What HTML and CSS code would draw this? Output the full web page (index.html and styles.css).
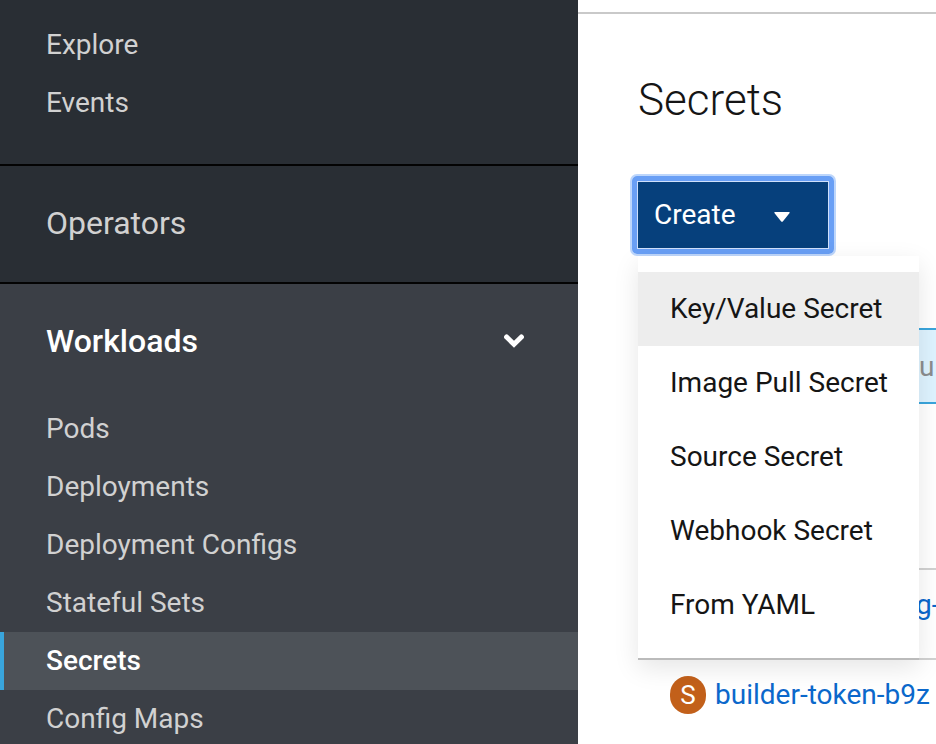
FILE: index.html
```html
<!DOCTYPE html>
<html lang="en">
<head>
<meta charset="utf-8">
<title>Secrets</title>
<link rel="stylesheet" href="styles.css">
</head>
<body>
<div class="shell">
  <nav class="sidebar">
    <section class="group group-first">
      <a class="nav-link" href="#explore">Explore</a>
      <a class="nav-link" href="#events">Events</a>
    </section>
    <section class="group">
      <button class="nav-toggle" type="button">Operators</button>
    </section>
    <section class="group group-open">
      <button class="nav-toggle" type="button" aria-expanded="true">Workloads
        <svg class="chevron" viewBox="0 0 20 14" aria-hidden="true"><path d="M2.600 3 10 10.300 17.400 3"/></svg>
      </button>
      <a class="nav-link" href="#pods">Pods</a>
      <a class="nav-link" href="#deployments">Deployments</a>
      <a class="nav-link" href="#deployment-configs">Deployment Configs</a>
      <a class="nav-link" href="#stateful-sets">Stateful Sets</a>
      <a class="nav-link current" href="#secrets" aria-current="page">Secrets</a>
      <a class="nav-link" href="#config-maps">Config Maps</a>
    </section>
  </nav>
  <main class="main">
    <header class="page-head">
      <h1>Secrets</h1>
      <div class="dropdown">
        <button class="create" type="button" aria-haspopup="true" aria-expanded="true">Create
          <svg class="caret" viewBox="0 0 16 14" aria-hidden="true"><path d="M1 4H15Q16.400 4 15.400 5.200L9 13.200Q8 14.400 7 13.200L.6 5.200Q-.4 4 1 4Z"/></svg>
        </button>
        <ul class="menu">
          <li><button class="menu-item active" type="button">Key/Value Secret</button></li>
          <li><button class="menu-item" type="button">Image Pull Secret</button></li>
          <li><button class="menu-item" type="button">Source Secret</button></li>
          <li><button class="menu-item" type="button">Webhook Secret</button></li>
          <li><button class="menu-item" type="button">From YAML</button></li>
        </ul>
      </div>
    </header>
    <div class="filter">u</div>
    <table class="secrets">
      <tbody>
        <tr><td><a class="clipped" href="#first">g-</a></td></tr>
        <tr><td><div class="resource"><span class="badge">S</span><a href="#builder">builder-token-b9z</a></div></td></tr>
      </tbody>
    </table>
  </main>
</div>
</body>
</html>
```
FILE: styles.css
```css
* { box-sizing: border-box; }

body {
  margin: 0;
  font-family: Roboto, "Liberation Sans", sans-serif;
  font-size: 28px;
  line-height: 42px;
  color: #151515;
  background: #fff;
}

button { font: inherit; border: 0; cursor: pointer; }
a { text-decoration: none; }

.shell { display: flex; height: 100vh; overflow: hidden; }

.sidebar {
  flex: 0 0 578px;
  background: #292e34;
}

.group { border-bottom: 2px solid #030303; }
.group-first { padding: 16px 0 32px; }
.group-open { background: #3b3f46; }

.nav-link {
  display: block;
  padding: 8px 47px 8px 42px;
  border-left: 4px solid transparent;
  color: #d1d1d1;
}

.nav-link.current {
  border-left-color: #39a5dc;
  background: #4d5258;
  color: #fff;
  font-weight: 500;
}

.nav-toggle {
  display: flex;
  align-items: center;
  justify-content: space-between;
  width: 100%;
  height: 116px;
  padding: 0 54px 2px 46px;
  background: none;
  color: #d1d1d1;
  font-size: 32px;
  text-align: left;
}

.group-open .nav-toggle { color: #fff; font-weight: 500; }

.chevron { width: 20px; height: 14px; }
.chevron path {
  fill: none;
  stroke: #fff;
  stroke-width: 5;
  stroke-linecap: round;
}

.main {
  flex: 1;
  min-width: 0;
  margin-top: 12px;
  padding-left: 60px;
  border-top: 2px solid #c9c9c9;
  overflow: hidden;
}

.page-head { padding-top: 55px; }

h1 {
  margin: 0 0 51px;
  font-size: 44px;
  line-height: 62px;
  font-weight: 300;
}

.dropdown { position: relative; width: max-content; }

.create {
  position: relative;
  display: flex;
  align-items: center;
  justify-content: space-between;
  width: 190px;
  height: 66px;
  padding: 0 38px 0 16px;
  background: #06407c;
  color: #fff;
  outline: 0;
  box-shadow: 0 0 0 1px #cfe0fb;
}

/* Rounded focus ring around the square button */
.create::after {
  content: "";
  position: absolute;
  inset: -6px;
  border: 5px solid #699ff5;
  border-radius: 5px;
  box-shadow: 0 0 0 2px #bdd6fb;
}

.caret { width: 16px; height: 14px; fill: #fff; }

.menu {
  position: absolute;
  top: 74px;
  left: 0;
  z-index: 1;
  width: 281px;
  margin: 0;
  padding: 16px 0;
  list-style: none;
  background: #fff;
  border-bottom: 2px solid #bbb;
  box-shadow: 0 8px 24px rgba(3, 3, 3, .1);
}

.menu-item {
  display: block;
  width: 100%;
  height: 74px;
  padding: 0 0 0 32px;
  background: none;
  color: #151515;
  text-align: left;
  white-space: nowrap;
}

.menu-item.active { background: #ededed; }

.filter {
  height: 76px;
  margin-top: 80px;
  padding: 16px 0 0 279px;
  border: 2px solid #39a5dc;
  border-right: 0;
  background: #def3ff;
  color: #8b8d8f;
}

.secrets {
  width: 100%;
  margin-top: 164px;
  border-collapse: collapse;
}

td {
  height: 90px;
  padding: 14px 0 0 32px;
  border-top: 2px solid #d1d1d1;
  vertical-align: top;
}

td a { color: #0b68cb; white-space: nowrap; }
.clipped { padding-left: 246px; }

.resource { display: flex; align-items: center; gap: 9px; }

.badge {
  flex: none;
  width: 36px;
  height: 38px;
  border-radius: 18px;
  background: #c2601a;
  color: #fff;
  font-size: 26px;
  line-height: 38px;
  text-align: center;
}
```
